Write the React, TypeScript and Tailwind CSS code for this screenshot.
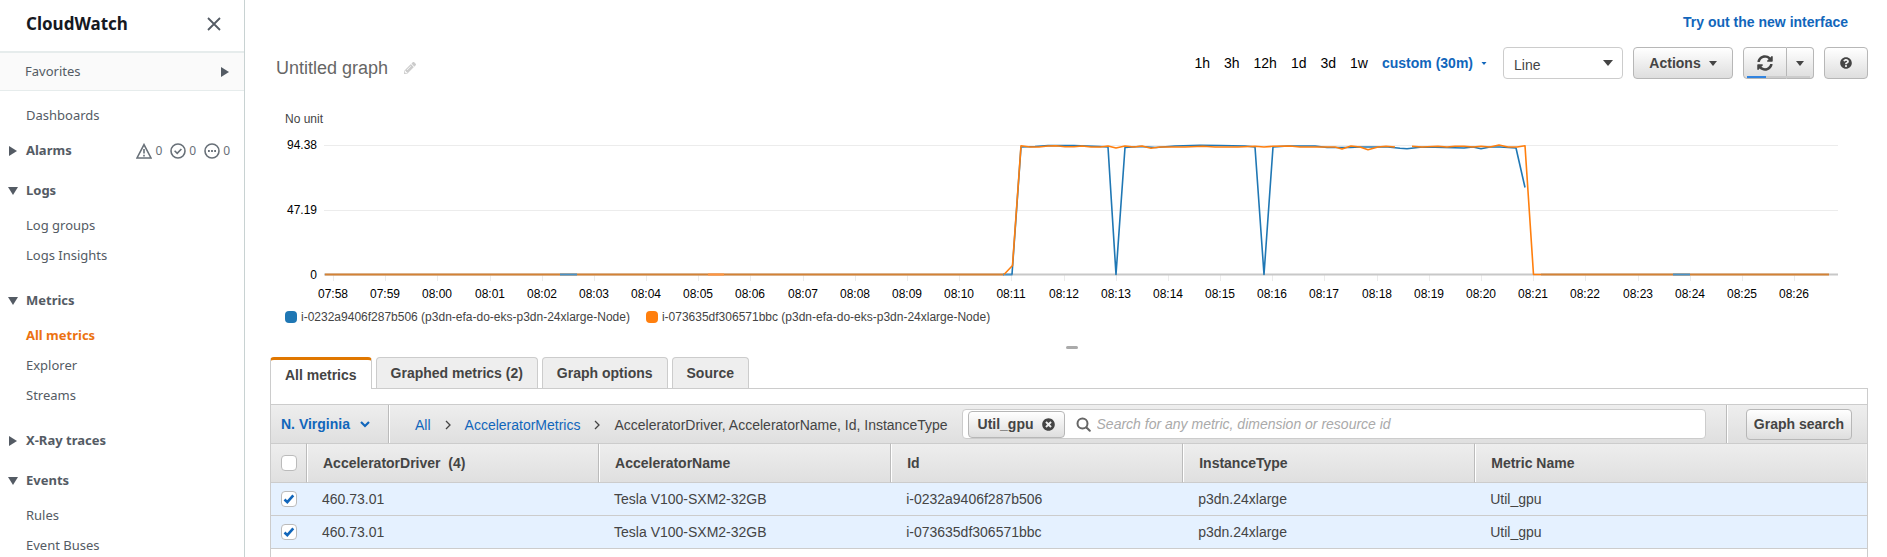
import { useState } from "react";
import type { ReactNode } from "react";
import { FaPencilAlt, FaQuestionCircle, FaSyncAlt, FaTimesCircle } from "react-icons/fa";

const BUTTON =
  "flex items-center justify-center rounded border border-[#b7b7b7] bg-linear-to-b from-white to-[#dedede] font-bold text-[#444]";

function Caret({ className }: { className: string }) {
  return (
    <svg viewBox="0 0 10 6" className={className} fill="currentColor" aria-hidden="true">
      <path d="M0 0h10L5 6z" />
    </svg>
  );
}

function SectionArrow({ open }: { open: boolean }) {
  return (
    <svg viewBox="0 0 10 10" className="size-[10px] shrink-0" fill="#545b64" aria-hidden="true">
      {open ? <path d="M0 1h10L5 9z" /> : <path d="M1 0v10l8-5z" />}
    </svg>
  );
}

function NavSection({
  title,
  open = false,
  items = [],
  extra,
}: {
  title: string;
  open?: boolean;
  items?: string[];
  extra?: ReactNode;
}) {
  return (
    <section className={open ? "pb-[10px]" : ""}>
      <div className="flex h-10 items-center pr-[14px] pl-2">
        <button type="button" className="flex items-center gap-2 font-bold" aria-expanded={open}>
          <SectionArrow open={open} />
          {title}
        </button>
        {extra}
      </div>
      {items.length > 0 && (
        <ul>
          {items.map((item) => (
            <NavItem key={item} label={item} active={item === "All metrics"} />
          ))}
        </ul>
      )}
    </section>
  );
}

function NavItem({ label, active = false }: { label: string; active?: boolean }) {
  return (
    <li className="flex h-[30px] items-center pl-[26px]">
      <a href="#" className={active ? "font-bold text-[#ec7211]" : ""}>
        {label}
      </a>
    </li>
  );
}

function AlarmCounts() {
  const icon = "size-4 shrink-0";
  return (
    <div className="ml-auto flex gap-2 text-xs text-[#687078]">
      <span className="flex items-center gap-[3px]">
        <svg viewBox="0 0 16 16" className={icon} fill="none" stroke="currentColor" strokeWidth="1.6">
          <path d="M8 1.6 15 15H1z" />
          <path d="M8 6v4.6M8 11.8v1.6" />
        </svg>
        0
      </span>
      <span className="flex items-center gap-[3px]">
        <svg viewBox="0 0 16 16" className={icon} fill="none" stroke="currentColor" strokeWidth="1.6">
          <circle cx="8" cy="8" r="7" />
          <path d="m4.6 7.8 2.6 2.6 4.2-4.4" />
        </svg>
        0
      </span>
      <span className="flex items-center gap-[3px]">
        <svg viewBox="0 0 16 16" className={icon} fill="none" stroke="currentColor" strokeWidth="1.6">
          <circle cx="8" cy="8" r="7" />
          <path d="M4 8h1.8M7.1 8h1.8M10.2 8H12" strokeWidth="1.8" />
        </svg>
        0
      </span>
    </div>
  );
}

function Sidebar() {
  return (
    <aside className="w-[245px] shrink-0 border-r border-[#c8d2d2] font-['Noto_Sans',sans-serif] text-[13px] text-[#545b64]">
      <header className="flex h-[51px] items-center justify-between pr-[22px] pb-1 pl-[26px]">
        <h1 className="text-[17px] font-bold text-[#16191f]">CloudWatch</h1>
        <button type="button" aria-label="Close navigation">
          <svg viewBox="0 0 16 16" className="size-4" fill="none" stroke="#545b64" strokeWidth="1.8">
            <path d="m2 2 12 12M14 2 2 14" />
          </svg>
        </button>
      </header>
      <button
        type="button"
        className="flex h-10 w-full items-center justify-between border-t-2 border-b border-[#e6ecec] bg-[#fafafa] pr-[14px] pl-[25px]"
      >
        Favorites
        <SectionArrow open={false} />
      </button>
      <nav className="pt-[10px]">
        <ul>
          <NavItem label="Dashboards" />
        </ul>
        <NavSection title="Alarms" extra={<AlarmCounts />} />
        <NavSection title="Logs" open items={["Log groups", "Logs Insights"]} />
        <NavSection title="Metrics" open items={["All metrics", "Explorer", "Streams"]} />
        <NavSection title="X-Ray traces" />
        <NavSection title="Events" open items={["Rules", "Event Buses"]} />
      </nav>
    </aside>
  );
}

const TIMES = Array.from({ length: 29 }, (_, i) => {
  const minutes = 7 * 60 + 58 + i;
  const pad = (n: number) => String(n).padStart(2, "0");
  return `${pad(Math.floor(minutes / 60))}:${pad(minutes % 60)}`;
});

const BLUE_LINE =
  "M742 164.5 751 37 765 36.5 778 35.5 804 35.6 830 36.5 838 37 846 164.5 855 37.5 870 36.5 886 37.5 905 36 930 35.3 950 35.5 975 36 985 37 994 164.5 1003 37 1018 36 1045 36 1057 37.5 1080 37.5 1090 37 1118 37 1130 38.3 1137 38.8 1150 37.3 1165 37.3 1194 38 1203 37 1211 38.7 1220 37 1230 37 1246 38 1255 77.5";

const ORANGE_LINE =
  "M734 164.5 742.5 155.5 751 35.8 760 37 769 37 778 36 786 35.8 795 36.8 804 36.8 812 36 821 37 830 37 838 36 846 38 855 36 864 37 872 36 881 38.2 890 37 915 37 933 36.2 945 37 968 37 985 36.3 994 37 1003 36.3 1020 36 1030 37 1065 37 1072 39 1081 36 1090 37 1098 39.8 1108 37 1116 36.2 1125 37M1142 36.2 1152 37 1168 36.2 1177 37 1185 36.2 1194 36.2 1203 37 1211 36.2 1220 37 1229 35 1238 37 1247 37 1255 35.8 1263.5 164.5 1271 164.5";

function Chart() {
  return (
    <svg viewBox="0 0 1598 199" className="block h-auto w-full" role="img" aria-label="Util_gpu over time">
      <g stroke="#ececec">
        <path d="M54 35.5H1568M54 100.5H1568" />
        {TIMES.map((t, i) => (
          <path key={t} d={`M${Math.round(63 + i * 52.18)}.5 165v6`} />
        ))}
      </g>
      <path d="M54 164.5H1568" stroke="#c8c8c8" strokeWidth="2" />
      <g fill="#000" className="text-xs">
        <text x="15" y="13" fill="#444">
          No unit
        </text>
        <g textAnchor="end">
          <text x="47" y="39">94.38</text>
          <text x="47" y="104">47.19</text>
          <text x="47" y="169">0</text>
        </g>
        <g textAnchor="middle">
          {TIMES.map((t, i) => (
            <text key={t} x={Math.round(63 + i * 52.18)} y="188">
              {t}
            </text>
          ))}
        </g>
      </g>
      <g fill="none" strokeWidth="2">
        <path d="M55 164.5H734M1271 164.5H1559" stroke="#d38235" />
        <path d="M290 164.5h17M733 164.5h9.5M1403 164.5h17" stroke="#4a92c6" />
        <path d="M438 164.5h16" stroke="#ff9440" />
      </g>
      <g fill="none" strokeWidth="1.6" strokeLinejoin="round">
        <path stroke="#1f77b4" d={BLUE_LINE} />
        <path stroke="#ff7f0e" d={ORANGE_LINE} />
      </g>
    </svg>
  );
}

function Toolbar() {
  return (
    <div className="flex h-8 items-center">
      <h2 className="flex items-center gap-4 pt-[10px] pl-[6px] text-lg text-[#666]">
        Untitled graph
        <button type="button" aria-label="Rename graph">
          <FaPencilAlt className="size-3 text-[#ccc]" />
        </button>
      </h2>
      <div className="ml-auto flex items-center gap-[14px] text-sm text-black">
        {["1h", "3h", "12h", "1d", "3d", "1w"].map((r) => (
          <button key={r} type="button">
            {r}
          </button>
        ))}
        <button type="button" className="flex items-center gap-2 font-bold text-[#1166bb]">
          custom (30m)
          <Caret className="h-[3px] w-[6px]" />
        </button>
      </div>
      <div className="relative ml-4">
        <select
          aria-label="Graph type"
          className="h-8 w-[120px] appearance-none rounded border border-[#ccc] bg-white pt-1 pl-[10px] text-sm text-[#444]"
        >
          <option>Line</option>
        </select>
        <Caret className="pointer-events-none absolute top-[13px] right-[10px] h-[6px] w-[10px] text-[#444]" />
      </div>
      <button type="button" className={`${BUTTON} ml-[10px] h-8 w-[100px] gap-2 text-sm`}>
        Actions
        <Caret className="h-[5px] w-2" />
      </button>
      <div className="relative ml-[10px] flex">
        <button type="button" aria-label="Refresh" className={`${BUTTON} h-8 w-11 rounded-r-none`}>
          <FaSyncAlt className="size-4" />
        </button>
        <button type="button" aria-label="Refresh options" className={`${BUTTON} h-8 w-[27px] rounded-l-none border-l-0`}>
          <Caret className="h-[5px] w-2" />
        </button>
        <div className="absolute inset-x-1 bottom-px h-[2px] bg-[#ccc]">
          <div className="h-full w-[19px] bg-[#3184e0]" />
        </div>
      </div>
      <button type="button" aria-label="Help" className={`${BUTTON} ml-[10px] h-8 w-11`}>
        <FaQuestionCircle className="size-3" />
      </button>
    </div>
  );
}

function Legend() {
  const series = [
    { name: "i-0232a9406f287b506 (p3dn-efa-do-eks-p3dn-24xlarge-Node)", swatch: "bg-[#1f77b4]" },
    { name: "i-073635df306571bbc (p3dn-efa-do-eks-p3dn-24xlarge-Node)", swatch: "bg-[#ff7f0e]" },
  ];
  return (
    <ul className="flex gap-4 pl-[15px] text-xs text-[#444]">
      {series.map((s) => (
        <li key={s.name} className="flex items-center gap-1">
          <span className={`size-3 rounded ${s.swatch}`} />
          {s.name}
        </li>
      ))}
    </ul>
  );
}

function Tabs() {
  return (
    <div role="tablist" className="flex gap-1 text-sm font-bold text-[#444]">
      <button
        type="button"
        role="tab"
        aria-selected="true"
        className="z-10 -mb-px h-8 rounded-t border-x border-t-3 border-x-[#ccc] border-t-[#e07700] bg-white px-[14px]"
      >
        All metrics
      </button>
      {["Graphed metrics (2)", "Graph options", "Source"].map((t) => (
        <button
          key={t}
          type="button"
          role="tab"
          aria-selected="false"
          className="h-[31px] rounded-t border border-b-0 border-[#ccc] bg-[#eee] px-[14px]"
        >
          {t}
        </button>
      ))}
    </div>
  );
}

function Chevron({ className }: { className: string }) {
  return (
    <svg viewBox="0 0 10 10" className={className} fill="none" stroke="currentColor" strokeWidth="1.3" aria-hidden="true">
      <path d="m3 1 4 4-4 4" />
    </svg>
  );
}

function FilterBar() {
  return (
    <div className="flex h-[39px] items-stretch border-t border-[#ccc] bg-linear-to-b from-[#eee] to-[#dfdfdf] text-sm text-[#444]">
      <button
        type="button"
        className="flex w-[118px] items-center gap-[10px] border-r border-[#bbb] pl-[10px] font-bold text-[#1166bb]"
      >
        N. Virginia
        <svg viewBox="0 0 10 7" className="h-[7px] w-[10px]" fill="none" stroke="currentColor" strokeWidth="2.2">
          <path d="m1 1 4 4 4-4" />
        </svg>
      </button>
      <nav aria-label="Metric path" className="flex shrink-0 items-center border-l border-white pt-[2px] pl-[25px]">
        <a href="#" className="text-[#1166bb]">
          All
        </a>
        <Chevron className="mx-3 size-[10px]" />
        <a href="#" className="text-[#1166bb]">
          AcceleratorMetrics
        </a>
        <Chevron className="mx-3 size-[10px]" />
        <span>AcceleratorDriver, AcceleratorName, Id, InstanceType</span>
      </nav>
      <div className="my-1 mr-5 ml-[14px] flex min-w-0 flex-1 items-center rounded border border-[#ccc] bg-white pl-[5px]">
        <button type="button" className={`${BUTTON} h-[27px] shrink-0 gap-2 px-[9px]`} aria-label="Remove filter Util_gpu">
          Util_gpu
          <FaTimesCircle className="size-[13px]" />
        </button>
        <label className="flex min-w-0 flex-1 items-center gap-[6px] pl-[11px]">
          <svg
            viewBox="0 0 15 15"
            className="size-[15px] shrink-0"
            fill="none"
            stroke="#666"
            strokeWidth="2"
            strokeLinecap="round"
            aria-hidden="true"
          >
            <circle cx="6.5" cy="6.5" r="5" />
            <path d="m10.500 10.500 3.300 3.300" />
          </svg>
          <input
            type="text"
            aria-label="Search metrics"
            placeholder="Search for any metric, dimension or resource id"
            className="min-w-0 flex-1 outline-none placeholder:text-[#aaa] placeholder:italic"
          />
        </label>
      </div>
      <div className="flex border-l border-[#bbb]">
        <div className="flex items-center border-l border-white pr-[15px] pl-[18px]">
          <button type="button" className={`${BUTTON} h-[31px] w-[106px]`}>
            Graph search
          </button>
        </div>
      </div>
    </div>
  );
}

function Checkbox({ label, initial }: { label: string; initial: boolean }) {
  const [checked, setChecked] = useState(initial);
  return (
    <label className="relative block size-4">
      <input
        type="checkbox"
        aria-label={label}
        checked={checked}
        onChange={(e) => setChecked(e.target.checked)}
        className="block size-4 appearance-none rounded border border-[#bbb] bg-white"
      />
      {checked && (
        <svg
          viewBox="0 0 16 16"
          className="pointer-events-none absolute inset-0 size-4"
          fill="none"
          stroke="#1166bb"
          strokeWidth="2.6"
          aria-hidden="true"
        >
          <path d="m3.500 8.500 2.800 2.600 6-6.800" />
        </svg>
      )}
    </label>
  );
}

function MetricsTable() {
  const columns = ["AcceleratorDriver  (4)", "AcceleratorName", "Id", "InstanceType", "Metric Name"];
  const ids = ["i-0232a9406f287b506", "i-073635df306571bbc"];
  return (
    <table className="w-full table-fixed border-separate border-spacing-0 text-left text-sm text-[#444]">
      <colgroup>
        <col className="w-9" />
        <col className="w-[18.3%]" />
        <col className="w-[18.3%]" />
        <col className="w-[18.3%]" />
        <col className="w-[18.3%]" />
        <col />
      </colgroup>
      <thead>
        <tr className="h-10 bg-linear-to-b from-[#eee] to-[#dfdfdf]">
          <th className="border-y border-r border-y-[#ccc] border-r-[#bbb] pl-[10px]">
            <Checkbox label="Select all" initial={false} />
          </th>
          {columns.map((c) => (
            <th
              key={c}
              className="border-y border-r border-y-[#ccc] border-r-[#bbb] pl-4 whitespace-pre shadow-[inset_1px_0_0_white] last:border-r-0"
            >
              {c}
            </th>
          ))}
        </tr>
      </thead>
      <tbody>
        {ids.map((id) => (
          <tr key={id} className="h-[33px] bg-[#e5f1ff]">
            <td className="border-b border-[#ccc] pl-[10px]">
              <Checkbox label={`Select ${id}`} initial />
            </td>
            {["460.73.01", "Tesla V100-SXM2-32GB", id, "p3dn.24xlarge", "Util_gpu"].map((v) => (
              <td key={v} className="border-b border-[#ccc] pl-[15px]">
                {v}
              </td>
            ))}
          </tr>
        ))}
        <tr className="h-[33px]">
          <td className="pl-[10px]">
            <Checkbox label="Select row 3" initial={false} />
          </td>
          <td colSpan={5} />
        </tr>
      </tbody>
    </table>
  );
}

export default function App() {
  return (
    <div className="flex h-screen overflow-hidden bg-white font-['Liberation_Sans',Arial,sans-serif]">
      <Sidebar />
      <main className="min-w-0 flex-1 pr-[19px] pl-[25px]">
        <div className="flex h-[47px] items-center justify-end pr-5 pb-[3px]">
          <a href="#" className="text-sm font-bold text-[#1166bb]">
            Try out the new interface
          </a>
        </div>
        <Toolbar />
        <div className="pt-[31px]">
          <Chart />
        </div>
        <Legend />
        <div className="flex h-8 items-center justify-center pt-[12px] pl-[6px]">
          <span className="h-[3px] w-3 rounded-xs bg-[#aaa]" />
        </div>
        <Tabs />
        <div className="border border-b-0 border-[#ccc] pt-[15px]">
          <FilterBar />
          <MetricsTable />
        </div>
      </main>
    </div>
  );
}
